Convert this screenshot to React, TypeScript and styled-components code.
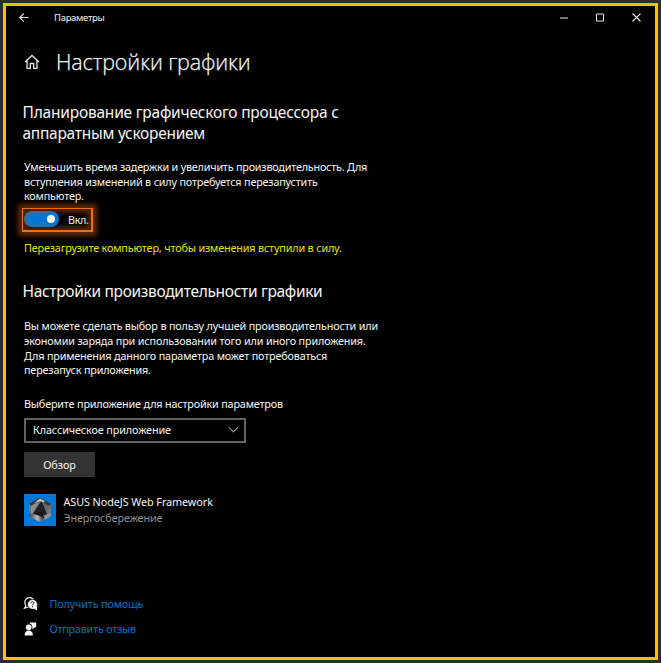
import React from 'react';
import styled, { createGlobalStyle } from 'styled-components';

const GlobalStyle = createGlobalStyle`
  * { box-sizing: border-box; }
  body {
    margin: 0;
    background: #2d2d30;
    font-family: "Noto Sans", "Open Sans", sans-serif;
    color: #f5f5f5;
  }
`;

const Desktop = styled.div`
  width: 661px;
  height: 663px;
  padding: 3px;
  overflow: hidden;
`;

const Window = styled.main`
  display: flex;
  flex-direction: column;
  width: 655px;
  height: 657px;
  border: 3px solid #fcbf04;
  background: #000;
`;

const TitleBar = styled.header`
  display: flex;
  align-items: center;
  height: 23px;
  padding: 0 13px;
  flex: none;
`;

const WindowTitle = styled.div`
  margin-left: 25px;
  flex: 1;
  font-size: 9.5px;
  line-height: 16px;
`;

const WindowControls = styled.div`
  display: flex;
  gap: 26px;
`;

const Icon = styled.svg`
  display: block;
  flex: none;
  fill: none;
  stroke: #e6e6e6;
  overflow: visible;
`;

const Content = styled.div`
  display: flex;
  flex-direction: column;
  align-items: flex-start;
  flex: 1;
  padding-left: 18px;
`;

const PageHeader = styled.div`
  display: flex;
  align-items: center;
  gap: 16px;
  height: 36px;
  margin-top: 15px;
`;

const PageTitle = styled.h1`
  margin: 0;
  font-family: "Open Sans", "Noto Sans", sans-serif;
  font-size: 21.5px;
  font-weight: 300;
  line-height: 36px;
  -webkit-text-stroke: 0.25px #f5f5f5;
`;

const SectionTitle = styled.h2<{ $top: number }>`
  margin: ${({ $top }) => $top}px 0 0 -1.5px;
  font-size: 15.5px;
  font-weight: 400;
  line-height: 21px;
`;

const Text = styled.div<{ $top?: number; $color?: string }>`
  margin-top: ${({ $top = 0 }) => $top}px;
  font-size: 10.8px;
  line-height: 14.7px;
  color: ${({ $color = 'inherit' }) => $color};
`;

const Line = styled.span<{ $track: number }>`
  display: block;
  white-space: nowrap;
  letter-spacing: ${({ $track }) => $track}px;
`;

const ToggleFrame = styled.div`
  position: relative;
  display: flex;
  align-items: center;
  width: 71px;
  height: 24px;
  margin: 4px 0 0 -2px;
  border: 2px solid #ee6f12;
  border-width: 1.5px 2px 2px 1.5px;
  box-shadow: 0 0 5px 4px rgba(190, 84, 14, 0.5);

  &::after {
    content: "";
    position: absolute;
    inset: 0;
    box-shadow: inset 0 0 5px 4px rgba(190, 84, 14, 0.42);
  }
`;

const Switch = styled.button`
  display: flex;
  align-items: center;
  justify-content: flex-end;
  width: 35px;
  height: 16px;
  margin: 0 9px 2px 1px;
  padding: 0 4px;
  border: 0;
  border-radius: 8px;
  background: #0078d7;
`;

const Thumb = styled.span`
  position: relative;
  z-index: 1;
  width: 8px;
  height: 8px;
  border-radius: 50%;
  background: #fff;
`;

const Select = styled.div`
  display: flex;
  align-items: center;
  justify-content: space-between;
  width: 222px;
  height: 25px;
  margin-top: 6px;
  padding: 0 5px 0 7px;
  border: 2px solid #626262;
`;

const BrowseButton = styled.button`
  display: flex;
  align-items: center;
  justify-content: center;
  width: 71px;
  height: 25px;
  margin-top: 9px;
  padding: 2px 0 0;
  border: 0;
  background: #333;
  color: inherit;
  font-family: inherit;
`;

const AppRow = styled.div`
  display: flex;
  gap: 7.5px;
  height: 32px;
  margin-top: 17px;
`;

const LinkRow = styled.a<{ $top: number }>`
  display: flex;
  align-items: center;
  gap: 11.5px;
  height: 16px;
  margin-top: ${({ $top }) => $top}px;
  color: #0070c8;
`;

function AppLogo() {
  return (
    <Icon width="32" height="32" viewBox="0 0 32 32">
      <defs>
        <linearGradient id="metal" x1="0" y1="0" x2="1" y2="1">
          <stop offset="0" stopColor="#7e858b" />
          <stop offset="0.5" stopColor="#596066" />
          <stop offset="1" stopColor="#8a9399" />
        </linearGradient>
        <linearGradient id="base" x1="0" y1="0" x2="1" y2="0">
          <stop offset="0" stopColor="#3a4046" />
          <stop offset="0.55" stopColor="#b4b9be" />
          <stop offset="1" stopColor="#2c3035" />
        </linearGradient>
      </defs>
      <g stroke="none">
        <path d="M0 0H32V32H0Z" fill="#0078d7" />
        <path d="M16 3.5L27 9.7V22L16 28.3L5 22V9.7Z" fill="url(#metal)" />
        <path d="M16 3.5L27 9.7L25.5 12L16 6.5L7 12L5 9.7Z" fill="#343a40" />
        <path d="M16 4.5L21 7.2L19 8.4L16 7L10 9.5Z" fill="#c4c9cd" />
        <path d="M7 12L15 8L9 19L7 20Z" fill="#899096" />
        <path d="M17.5 7L23.5 21.5L9 19.5Z" fill="#1d2126" />
        <path d="M5 19.5L15 21.2L20 24L16 28.3L5 22Z" fill="url(#base)" />
        <path d="M9 19.5L18 18L20.5 24.5L15 21.8Z" fill="#17191d" />
        <path d="M21 21L27 19V22L20.5 25.7Z" fill="#8e989f" />
      </g>
    </Icon>
  );
}

function HelpIcon() {
  return (
    <Icon width="14" height="14" viewBox="0 0 14 14">
      <path d="M2 8.6A4.5 4.5 0 1 1 9.3 2.3M2 8.6L0.6 11.2L4.4 10" strokeWidth="1.3" />
      <circle cx="8.5" cy="7.4" r="4.9" fill="#f5f5f5" stroke="#000" strokeWidth="0.5" />
      <path d="M9.5 11.6L13.2 13.6L12.8 9Z" fill="#f5f5f5" stroke="none" />
      <path d="M7.1 6.2C7.1 4.2 10 4.4 9.9 6.1C9.8 7.2 8.5 7.1 8.5 8.4M8.5 9.2V10.3" stroke="#222" strokeWidth="1" />
    </Icon>
  );
}

function FeedbackIcon() {
  return (
    <Icon width="14" height="14" viewBox="0 0 14 14">
      <g fill="#f5f5f5" stroke="none">
        <circle cx="4.7" cy="5.3" r="2.9" />
        <path d="M0.6 13.4C0.6 10.2 2.3 8.6 4.7 8.6S8.9 10.2 8.9 13.4Z" />
        <path d="M5.8 0.4H12.2V5.2H10.9L8.4 7.4V5A4 4 0 0 0 5.8 1.5Z" />
      </g>
    </Icon>
  );
}

export default function App() {
  return (
    <>
      <GlobalStyle />
      <Desktop>
        <Window>
          <TitleBar>
            <Icon width="10" height="10" viewBox="0 0 10 10">
              <path d="M9.5 4.5H0.8M4.8 0.4L0.7 4.5L4.8 8.6" strokeWidth="1.1" />
            </Icon>
            <WindowTitle><Line $track={-0.31}>Параметры</Line></WindowTitle>
            <WindowControls>
              <Icon width="10" height="10" viewBox="0 0 10 10"><path d="M0 5H8" /></Icon>
              <Icon width="10" height="10" viewBox="0 0 10 10"><path d="M0.5 1H7.5V8H0.5Z" /></Icon>
              <Icon width="10" height="10" viewBox="0 0 10 10"><path d="M0.5 0.5L8.5 8.5M8.5 0.5L0.5 8.5" strokeWidth="1.1" /></Icon>
            </WindowControls>
          </TitleBar>
          <Content>
            <PageHeader>
              <Icon width="16" height="16" viewBox="0 0 16 16">
                <path d="M1 8L8 1.5L15 8M3 6.5V14.4H6.3V9.5H9.7V14.4H13V6.5" strokeWidth="1.3" />
              </Icon>
              <PageTitle><Line $track={-0.12}>Настройки графики</Line></PageTitle>
            </PageHeader>

            <SectionTitle $top={22}>
              <Line $track={-0.21}>Планирование графического процессора с</Line>
              <Line $track={-0.265}>аппаратным ускорением</Line>
            </SectionTitle>
            <Text $top={16}>
              <Line $track={-0.21}>Уменьшить время задержки и увеличить производительность. Для</Line>
              <Line $track={-0.175}>вступления изменений в силу потребуется перезапустить</Line>
              <Line $track={-0.17}>компьютер.</Line>
            </Text>
            <ToggleFrame>
              <Switch role="switch" aria-checked="true"><Thumb /></Switch>
              <Text $top={1}><Line $track={-0.33}>Вкл.</Line></Text>
            </ToggleFrame>
            <Text $top={8.5} $color="#e6e600">
              <Line $track={-0.155}>Перезагрузите компьютер, чтобы изменения вступили в силу.</Line>
            </Text>

            <SectionTitle $top={25.6}>
              <Line $track={-0.315}>Настройки производительности графики</Line>
            </SectionTitle>
            <Text $top={17.4}>
              <Line $track={-0.162}>Вы можете сделать выбор в пользу лучшей производительности или</Line>
              <Line $track={-0.149}>экономии заряда при использовании того или иного приложения.</Line>
              <Line $track={-0.171}>Для применения данного параметра может потребоваться</Line>
              <Line $track={-0.176}>перезапуск приложения.</Line>
            </Text>
            <Text $top={19}>
              <Line $track={-0.17}>Выберите приложение для настройки параметров</Line>
            </Text>
            <Select>
              <Text><Line $track={-0.1}>Классическое приложение</Line></Text>
              <Icon width="11" height="6" viewBox="0 0 11 6">
                <path d="M0.8 0.3L5.5 4.9L10.2 0.3" strokeWidth="1" />
              </Icon>
            </Select>
            <BrowseButton>
              <Text><Line $track={-0.05}>Обзор</Line></Text>
            </BrowseButton>
            <AppRow>
              <AppLogo />
              <div>
                <Text $top={1.2}><Line $track={-0.07}>ASUS NodeJS Web Framework</Line></Text>
                <Text $top={1.3} $color="#8f8f8f"><Line $track={-0.09}>Энергосбережение</Line></Text>
              </div>
            </AppRow>

            <LinkRow $top={70.5}>
              <HelpIcon />
              <Text><Line $track={-0.16}>Получить помощь</Line></Text>
            </LinkRow>
            <LinkRow $top={9}>
              <FeedbackIcon />
              <Text><Line $track={-0.22}>Отправить отзыв</Line></Text>
            </LinkRow>
          </Content>
        </Window>
      </Desktop>
    </>
  );
}
